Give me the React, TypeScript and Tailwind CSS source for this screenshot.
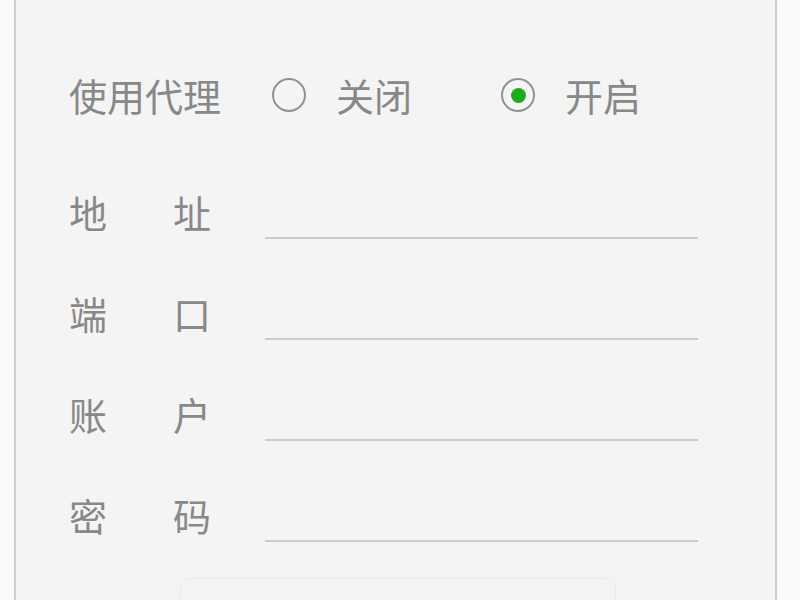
import React, { useState } from 'react';

const fields = [
  { key: 'host', label: ['地', '址'] },
  { key: 'port', label: ['端', '口'] },
  { key: 'user', label: ['账', '户'] },
  { key: 'pass', label: ['密', '码'] },
];

const Radio: React.FC<{ checked: boolean; label: string; onClick: () => void; className?: string }> = ({
  checked,
  label,
  onClick,
  className = '',
}) => (
  <button type="button" onClick={onClick} className={`flex items-center ${className}`}>
    <span className="flex h-[34px] w-[34px] items-center justify-center rounded-full border-2 border-[#929292]">
      {checked && <span className="h-[15px] w-[15px] rounded-full bg-[#1aad19]" />}
    </span>
    <span className="ml-[30px] leading-none">{label}</span>
  </button>
);

export default function App() {
  const [proxy, setProxy] = useState(true);
  const [values, setValues] = useState<Record<string, string>>({});

  return (
    <div
      className="h-[600px] w-full overflow-hidden bg-[#f9f9f9] pl-[14px] pr-[23px] text-[38px] text-[#888888]"
      style={{ fontFamily: '"Noto Sans CJK SC", "Noto Sans", sans-serif' }}
    >
      <div className="flex h-full flex-col border-x-2 border-[#cdcdcd] bg-[#f4f4f4] pl-[53px] pr-[77px] pt-[76px]">
        <div className="flex h-[40px] items-center">
          <span className="leading-none">使用代理</span>
          <Radio className="ml-[51px]" checked={!proxy} label="关闭" onClick={() => setProxy(false)} />
          <Radio className="ml-[89px]" checked={proxy} label="开启" onClick={() => setProxy(true)} />
        </div>

        <div className="mt-[70px] flex flex-col gap-[46px]">
          {fields.map((f) => (
            <div key={f.key} className="flex h-[55px] items-center">
              <span className="flex w-[142px] justify-between leading-none">
                <span>{f.label[0]}</span>
                <span>{f.label[1]}</span>
              </span>
              <input
                type={f.key === 'pass' ? 'password' : 'text'}
                value={values[f.key] ?? ''}
                onChange={(e) => setValues({ ...values, [f.key]: e.target.value })}
                className="ml-[54px] h-full flex-1 border-b-2 border-[#cbcbcb] bg-transparent text-[24px] text-[#555] outline-none"
              />
            </div>
          ))}
        </div>

        <div className="mt-[36px] flex justify-center">
          <button
            type="button"
            className="h-[60px] w-[436px] translate-x-[14px] rounded-[10px] border border-[#efeaea] bg-[#f5f4f4]"
          />
        </div>
      </div>
    </div>
  );
}
